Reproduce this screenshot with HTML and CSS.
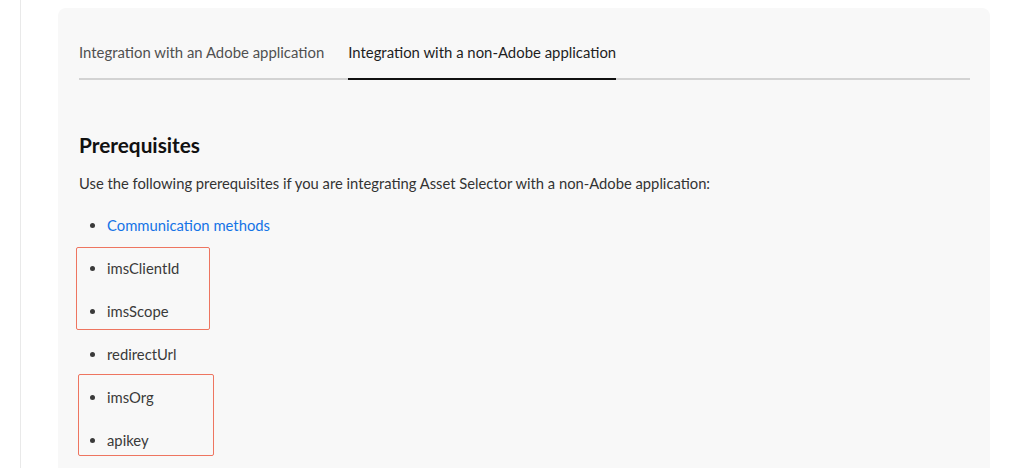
FILE: index.html
```html
<!DOCTYPE html>
<html>
<head>
<meta charset="utf-8">
<link rel="stylesheet" href="styles.css">
</head>
<body>
<div class="page">
  <div class="rail"></div>
  <div class="panel">
    <div class="tabs">
      <div class="tab">Integration with an Adobe application</div>
      <div class="tab active">Integration with a non-Adobe application</div>
    </div>
    <h2 class="title">Prerequisites</h2>
    <p class="intro">Use the following prerequisites if you are integrating Asset Selector with a non-Adobe application:</p>
    <div class="listwrap">
      <ul class="list">
        <li><a class="link" href="#">Communication methods</a></li>
        <li>imsClientId</li>
        <li>imsScope</li>
        <li>redirectUrl</li>
        <li>imsOrg</li>
        <li>apikey</li>
      </ul>
      <div class="mark mark-a"></div>
      <div class="mark mark-b"></div>
    </div>
  </div>
</div>
</body>
</html>
```

FILE: styles.css
```css
html, body {
  margin: 0;
  padding: 0;
  background: #ffffff;
  overflow: hidden;
}
.page {
  display: flex;
  height: 468px;
  overflow: hidden;
  font-family: Lato, "Open Sans", sans-serif;
}
.rail {
  width: 1px;
  margin-left: 20px;
  background: #e9e9e9;
  flex: none;
}
.panel {
  margin: 8px 0 0 37px;
  width: 932px;
  background: #f8f8f8;
  border-radius: 8px 8px 0 0;
  padding: 0 20px 0 21px;
  box-sizing: border-box;
  height: 460px;
  overflow: hidden;
}
.tabs {
  display: flex;
  gap: 24px;
  border-bottom: 2px solid #d3d3d3;
  padding-top: 35px;
}
.tab {
  font-size: 14.9px;
  color: #505050;
  padding-bottom: 17px;
  margin-bottom: -2px;
  border-bottom: 2px solid transparent;
  line-height: 18px;
}
.tab.active {
  color: #1e1e1e;
  border-bottom-color: #111111;
}
.title {
  margin: 53px 0 0 0;
  font-size: 20.8px;
  font-weight: 700;
  color: #111111;
  line-height: 24px;
}
.intro {
  margin: 16px 0 0 0;
  font-size: 14.75px;
  color: #333333;
  line-height: 20px;
}
.listwrap {
  position: relative;
  margin-top: 22px;
}
.list {
  margin: 0;
  padding: 0 0 0 28px;
  font-size: 14.8px;
  color: #3a3a3a;
}
.list li {
  line-height: 20px;
  margin-bottom: 23px;
}
.link {
  color: #1473e6;
  text-decoration: none;
}
.mark {
  position: absolute;
  box-sizing: border-box;
  border: 1.5px solid #ee7560;
  border-radius: 2px;
}
.mark-a {
  left: -3px;
  top: 32px;
  width: 134px;
  height: 83px;
}
.mark-b {
  left: -1px;
  top: 159px;
  width: 136px;
  height: 82px;
}
```
